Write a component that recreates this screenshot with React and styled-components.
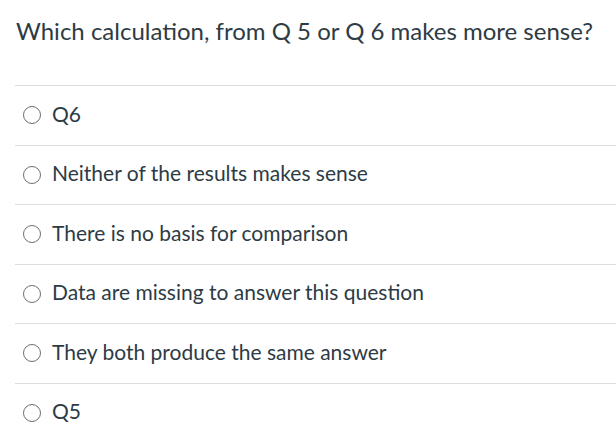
import React from "react";
import styled, { createGlobalStyle } from "styled-components";

const Global = createGlobalStyle`
  html, body { margin: 0; padding: 0; background: #fff; }
  body { font-family: Lato, "Open Sans", sans-serif; color: #2d3b45; }
`;

const Page = styled.div`
  padding: 14px 0 0 15px;
  width: 601px;
`;

const Title = styled.h2`
  margin: 0 0 0 1px;
  font-size: 24px;
  font-weight: 400;
  line-height: 34px;
  height: 71px;
`;

const List = styled.div`
  display: flex;
  flex-direction: column;
`;

const Row = styled.label`
  display: flex;
  align-items: center;
  gap: 11px;
  height: 58.5px;
  border-top: 1px solid #dcdfe1;
  padding-left: 8px;
  font-size: 21px;
`;

const Radio = styled.span`
  box-sizing: border-box;
  width: 18px;
  height: 18px;
  border-radius: 50%;
  border: 1.5px solid #6f6f6f;
  flex: none;
`;

const Text = styled.span`
  margin-bottom: 4px;
`;

const options = [
  "Q6",
  "Neither of the results makes sense",
  "There is no basis for comparison",
  "Data are missing to answer this question",
  "They both produce the same answer",
  "Q5",
];

export default function App() {
  return (
    <>
      <Global />
      <Page>
        <Title>Which calculation, from Q 5 or Q 6 makes more sense?</Title>
        <List>
          {options.map((o) => (
            <Row key={o}>
              <Radio />
              <Text>{o}</Text>
            </Row>
          ))}
        </List>
      </Page>
    </>
  );
}
